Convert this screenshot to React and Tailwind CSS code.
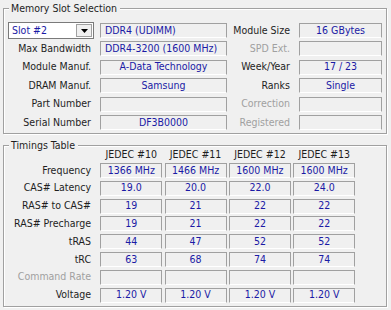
import React from "react";

const font = { fontFamily: "'DejaVu Sans Condensed', 'Liberation Sans', sans-serif" };

function Field({ children, align = "center", className = "" }) {
  return (
    <div
      className={`flex h-[15px] items-center overflow-hidden whitespace-nowrap border-x border-t border-b border-[#a0a0a0] border-b-white text-[#1a1aa5] ${
        align === "left" ? "justify-start pl-[4px]" : "justify-center"
      } ${className}`}
    >
      {children}
    </div>
  );
}

function Label({ children, dim, className = "" }) {
  return (
    <div className={`flex h-[15px] items-center justify-end whitespace-nowrap ${dim ? "text-[#a0a0a0]" : "text-[#1e1e1e]"} ${className}`}>
      {children}
    </div>
  );
}

function Group({ title, children, className = "" }) {
  return (
    <fieldset className={`border border-[#a0a0a0] shadow-[1px_1px_0_#ffffff,inset_1px_1px_0_#ffffff] ${className}`}>
      <legend className="ml-[5px] bg-[#f0f0f0] pl-[2px] pr-[3px] leading-[14px] text-[#1e1e1e]">{title}</legend>
      {children}
    </fieldset>
  );
}

const slotRows = [
  { label: "Max Bandwidth", value: "DDR4-3200 (1600 MHz)", align: "left", rl: "SPD Ext.", rdim: true, rv: "" },
  { label: "Module Manuf.", value: "A-Data Technology", rl: "Week/Year", rv: "17 / 23" },
  { label: "DRAM Manuf.", value: "Samsung", rl: "Ranks", rv: "Single" },
  { label: "Part Number", value: "", rl: "Correction", rdim: true, rv: "" },
  { label: "Serial Number", value: "DF3B0000", rl: "Registered", rdim: true, rv: "" },
];

const timings = [
  ["Frequency", ["1366 MHz", "1466 MHz", "1600 MHz", "1600 MHz"]],
  ["CAS# Latency", ["19.0", "20.0", "22.0", "24.0"]],
  ["RAS# to CAS#", ["19", "21", "22", "22"]],
  ["RAS# Precharge", ["19", "21", "22", "22"]],
  ["tRAS", ["44", "47", "52", "52"]],
  ["tRC", ["63", "68", "74", "74"]],
  ["Command Rate", ["", "", "", ""], true],
  ["Voltage", ["1.20 V", "1.20 V", "1.20 V", "1.20 V"]],
];

export default function App() {
  return (
    <div className="h-[310px] w-[391px] overflow-hidden bg-[#f0f0f0] pl-[3px] pt-[1px] text-[10.5px]" style={font}>
      <Group title="Memory Slot Selection" className="w-[384px]">
        <div className="grid grid-cols-[96px_127px_72px_83px] auto-rows-[18.4px] pt-[8px]">
          <div className="-mt-[1px] pl-[4px]">
            <div className="flex h-[17px] w-[86px] items-stretch border border-[#7a7a7a] bg-white">
              <div className="flex flex-1 items-center pl-[3px] text-[#1a1aa5]">Slot #2</div>
              <div className="my-[1px] mr-[1px] flex w-[16px] items-center justify-center border border-[#a0a0a0] bg-[#f0f0f0]">
                <svg width="7" height="4" viewBox="0 0 7 4">
                  <path d="M0 0h7L3.5 4z" fill="#000" />
                </svg>
              </div>
            </div>
          </div>
          <Field align="left">DDR4 (UDIMM)</Field>
          <Label className="pr-[9px]">Module Size</Label>
          <Field>16 GBytes</Field>
          {slotRows.map((r) => (
            <React.Fragment key={r.label}>
              <Label className="pr-[9px]">{r.label}</Label>
              <Field align={r.align}>{r.value}</Field>
              <Label dim={r.rdim} className="pr-[9px]">{r.rl}</Label>
              <Field>{r.rv}</Field>
            </React.Fragment>
          ))}
        </div>
      </Group>
      <Group title="Timings Table" className="mt-[4px] w-[384px] pb-[1px]">
        <div className="-mt-[5.4px] grid grid-cols-[94px_repeat(4,62px)] grid-rows-[16px_repeat(8,17.8px)] gap-x-[2.3px]">
          <div />
          {["JEDEC #10", "JEDEC #11", "JEDEC #12", "JEDEC #13"].map((h) => (
            <div key={h} className="flex h-[15px] items-center justify-center text-[#1e1e1e]">{h}</div>
          ))}
          {timings.map(([label, vals, dim]) => (
            <React.Fragment key={label}>
              <Label dim={dim} className="pr-[7px]">{label}</Label>
              {vals.map((v, i) => (
                <Field key={i}>{v}</Field>
              ))}
            </React.Fragment>
          ))}
        </div>
      </Group>
    </div>
  );
}
